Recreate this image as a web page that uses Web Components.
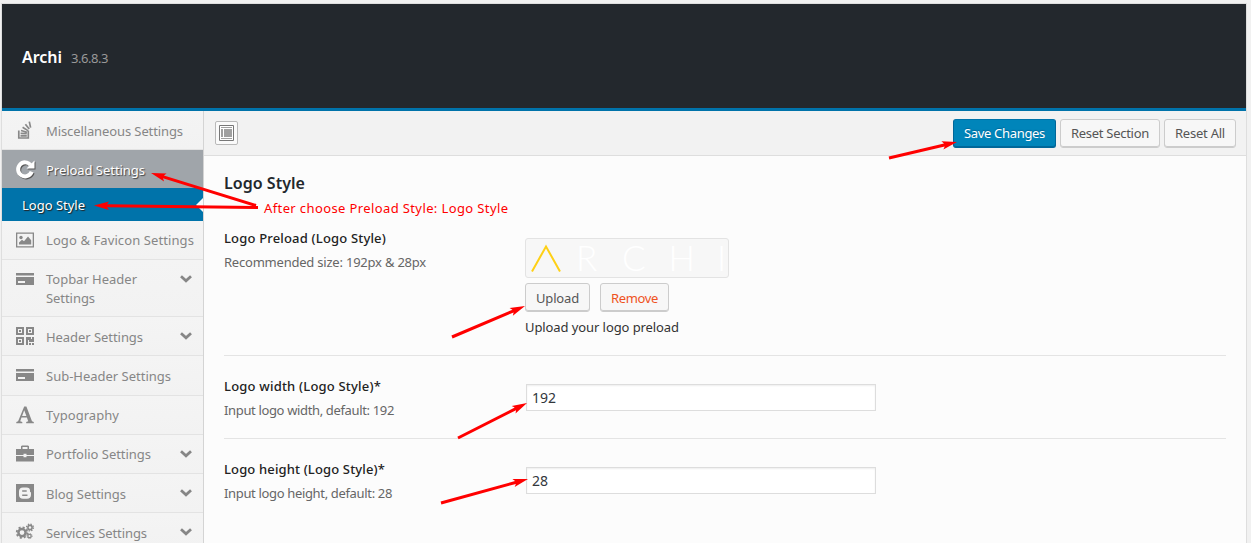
<!DOCTYPE html>
<html lang="en">
<head>
<meta charset="utf-8">
<title>Archi Settings</title>
<style>
html,body{margin:0;height:100%;overflow:hidden;background:#f1f1f1}
body{font:13px/19px "Noto Sans","Open Sans",sans-serif;color:#333}
</style>
</head>
<body>
<options-panel></options-panel>
<script>
const define=(name,html,setup)=>customElements.define(name,class extends HTMLElement{
  connectedCallback(){
    if(this.shadowRoot)return;
    const t=document.createElement('template');
    t.innerHTML=html;
    this.attachShadow({mode:'open'}).append(t.content.cloneNode(true));
    if(setup)setup(this,this.shadowRoot);
  }
});

/* A line of text tracked so that it fills the width given in its w attribute. */
define('tracked-text',`<style>:host{display:inline-block;white-space:nowrap}span{display:inline-block}</style><span><slot></slot></span>`,(el,root)=>{
  const s=root.querySelector('span'),w=+el.getAttribute('w'),n=el.textContent.length;
  s.style.letterSpacing=((w-s.getBoundingClientRect().width)/n)+'px';
});

const ICONS={
 stack:'<g fill="none" stroke="#888" stroke-width="1.7"><path d="M2.8 9.500v7.500h9.500v-7.500M4.500 14.800h6.300M4.600 12.400l6.200.3M5 9.500l6 1.700M6.600 6.300l5.300 3.300M9.400 3.200l3.800 4.900M13.300.6l1.300 6"/></g>',
 repeat:'<path d="M15.700 11.800A7 7 0 1 1 14.600 5" fill="none" stroke="#fff" stroke-width="4"/><path d="M18.500 .5v8h-8z" fill="#fff"/>',
 image:'<path fill="#888" fill-rule="evenodd" d="M0 1.500h18v15H0zM1.300 2.800v12.400h15.400V2.800z"/><circle cx="5" cy="6.500" r="1.700" fill="#888"/><path fill="#888" d="M3 13.500v-2l3-2.700 2 1.500 4-4.800 3.200 3.700v4.300z"/>',
 card:'<path fill="#888" fill-rule="evenodd" d="M0 3h18v2.500H0zM0 7h18v8H0zM2 11v2h7v-2z"/>',
 qr:'<path fill="#888" fill-rule="evenodd" d="M0 0h8v8H0zM2 2v4h4V2zM3 3h2v2H3zM10 0h8v8h-8zM12 2v4h4V2zM13 3h2v2h-2zM0 10h8v8H0zM2 12v4h4v-4zM3 13h2v2H3zM10 10h5v2h1v-2h2v5h-5v-2h-1v5h-2zM13 16h2v2h-2zM16 16h2v2h-2z"/>',
 font:'<path fill="#888" fill-rule="evenodd" d="M8.200.5h2.200l5.600 14.700 1.800.7v1.400h-7.600v-1.400l2-.7-1.300-3.700H5.500l-1.300 3.700 2.100.7v1.400H.3v-1.400l1.800-.7zM8.200 4.300l-2.100 5.600h4.300z"/>',
 briefcase:'<path fill="#888" fill-rule="evenodd" d="M5 4V1.300L6 .5h6l1 .8V4h5v6h-7.500V8.800h-3V10H0V4zM6.500 2v2h5V2zM0 11h7.500v1.300h3V11H18v5.500H0z"/>',
 blog:'<path fill="#888" d="M0 0h18v18H0z"/><path fill="#f2f2f2" fill-rule="evenodd" d="M7 3.500h3.500c2.300 0 3.500 1.200 3.500 3v1.200l1 .8v2.500c0 2.300-1.500 3.700-4 3.700H7c-2.500 0-4-1.500-4-3.700V7.200c0-2.200 1.500-3.700 4-3.700zM6.200 6.200v1.500h4.500V6.200zM6.200 10.500v1.600h5.300v-1.600z"/>',
 cogs:'<g fill="none" stroke="#888"><circle cx="6" cy="9.600" r="3.600" stroke-width="2.500"/><circle cx="6" cy="9.600" r="5.300" stroke-width="1.800" stroke-dasharray="2.080 2.080"/><circle cx="14" cy="4.500" r="2.100" stroke-width="1.600"/><circle cx="14" cy="4.500" r="3.400" stroke-width="1.400" stroke-dasharray="1.340 1.340"/><circle cx="13.500" cy="13" r="1.700" stroke-width="1.300"/><circle cx="13.500" cy="13" r="2.600" stroke-width="1" stroke-dasharray="1.020 1.020"/></g>'
};

define('nav-item',`<style>
:host{display:flex;box-sizing:border-box;height:39px;padding:10px 0 0 14px;border-bottom:1px solid #e3e3e3;color:#868686;align-items:flex-start;background:linear-gradient(#f4f4f4,#f2f2f2)}
:host([tall]){height:57px}
:host([on]){background:#a0a5aa;color:#fff;border:0;height:38px;text-shadow:1px 1px 1px #444}
:host([on]) .i{filter:drop-shadow(1px 1px 0 #555)}
.i{flex:none;width:18px;height:18px;overflow:visible}
.t{flex:1;margin-left:12px}
:host([low]) .t{margin-top:1px}
.c{flex:none;width:12px;height:8px;margin:5px 11px 0 0}
</style><svg class="i" viewBox="0 0 18 18"></svg><div class="t"><slot></slot></div>`,(el,r)=>{
  r.querySelector('.i').innerHTML=ICONS[el.getAttribute('icon')];
  if(el.hasAttribute('more'))r.querySelector('.t').insertAdjacentHTML('afterend','<svg class="c" viewBox="0 0 12 8"><path d="M1 1.300l5 4.500 5-4.500" fill="none" stroke="#868686" stroke-width="2.800"/></svg>');
});

define('sub-item',`<style>:host{display:flex;justify-content:space-between;align-items:center;height:33px;padding-left:20px;background:#0073aa;color:#fff;text-shadow:1px 1px 1px #222}i{border:7px solid transparent;border-left:0;border-right-color:#fcfcfc}::slotted(*){margin-top:2px}</style><slot></slot><i></i>`);

define('side-nav',`<style>:host{display:block;width:201px;flex:none;background:#f2f2f2;border-right:1px solid #d4d4d4;overflow:hidden}</style>
<nav-item low icon="stack"><tracked-text w="137">Miscellaneous Settings</tracked-text></nav-item>
<nav-item low icon="repeat" on><tracked-text w="99">Preload Settings</tracked-text></nav-item>
<sub-item><tracked-text w="63">Logo Style</tracked-text></sub-item>
<nav-item icon="image"><tracked-text w="148">Logo &amp; Favicon Settings</tracked-text></nav-item>
<nav-item icon="card" tall more><tracked-text w="91">Topbar Header</tracked-text><br><tracked-text w="49">Settings</tracked-text></nav-item>
<nav-item low icon="qr" more><tracked-text w="97">Header Settings</tracked-text></nav-item>
<nav-item low icon="card" style="height:40px"><tracked-text w="125">Sub-Header Settings</tracked-text></nav-item>
<nav-item icon="font"><tracked-text w="73">Typography</tracked-text></nav-item>
<nav-item icon="briefcase" more><tracked-text w="105">Portfolio Settings</tracked-text></nav-item>
<nav-item low icon="blog" more><tracked-text w="80">Blog Settings</tracked-text></nav-item>
<nav-item low icon="cogs" more><tracked-text w="101">Services Settings</tracked-text></nav-item>`);

define('wp-button',`<style>:host{display:inline-block}
button{display:block;box-sizing:border-box;width:100%;height:29px;padding:0;margin:0;border:1px solid #ccc;border-radius:3px;background:#f7f7f7;box-shadow:inset 0 -1px 0 #ccc;color:#555;font:inherit;line-height:26px;text-align:center}
:host([up]) button{padding-bottom:2px}
:host([primary]) button{background:#0085ba;border-color:#0073aa #006799 #006799;box-shadow:inset 0 -1px 0 #006799;color:#fff;text-shadow:0 -1px 1px #006799}
:host([danger]) button{color:#ef521d}</style><button><slot></slot></button>`);

define('panel-toolbar',`<style>:host{display:flex;box-sizing:border-box;height:45px;padding:8px 10px 0 11px;background:#f2f2f2;border-bottom:1px solid #dedede;gap:4px}
.e{box-sizing:border-box;width:23px;height:24px;margin:2px auto 0 0;border:1px solid #b9b9b9;border-radius:2px;background:#fafafa;display:grid;place-items:center}</style>
<div class="e"><svg width="15" height="16"><path d="M.5.500h14v15H.5z" fill="#fff" stroke="#777"/><path d="M2 2h11v1H2zM2 4h2v8H2zM5 4h8v8H5zM2 13h11v1H2z" fill="#a0a0a0"/></svg></div>
<wp-button up primary style="width:103px"><tracked-text w="81">Save Changes</tracked-text></wp-button>
<wp-button up style="width:100px"><tracked-text w="78">Reset Section</tracked-text></wp-button>
<wp-button up style="width:72px"><tracked-text w="50">Reset All</tracked-text></wp-button>`);

define('field-row',`<style>:host{display:grid;grid-template-columns:301px 1fr;box-sizing:border-box;height:83px;border-bottom:1px solid #e4e4e4;margin:0 20px}
:host([last]){border:0}
.l{padding-top:21px;color:#222;font-weight:500}.d{margin-top:5px;color:#666;font-weight:400}</style>
<div class="l"><slot name="label"></slot><div class="d"><slot name="hint"></slot></div></div><div><slot></slot></div>`);

define('text-field',`<style>:host{display:block;padding:28px 0 0 1px}input{display:block;box-sizing:border-box;width:350px;height:27px;margin:0;padding:0 5px 1px;border:1px solid #ddd;background:#fff;box-shadow:inset 0 1px 2px rgba(0,0,0,.07);color:#32373c;font:14px "Noto Sans","Open Sans",sans-serif;letter-spacing:-.05px;outline:0}</style><input>`,(el,r)=>{r.querySelector('input').value=el.getAttribute('value')});

define('logo-preview',`<style>:host{display:block;box-sizing:border-box;width:204px;height:40px;border:1px solid #e3e3e3;border-radius:3px;background:#f7f7f7}svg{display:block;overflow:visible}text{font:300 35px Lato,sans-serif;fill:#fff}</style>
<svg width="202" height="38"><path d="M6 32.500L20 7.500l14 25" fill="none" stroke="#fed016" stroke-width="2"/><text x="50" y="32">R</text><text x="96" y="32">C</text><text x="142.500" y="32">H</text><text x="191" y="32">I</text></svg>`);

define('settings-form',`<style>:host{display:block}h2{margin:0;padding:16px 20px 0;height:39px;box-sizing:border-box;font-size:16px;line-height:22px;font-weight:600;color:#23282d}
field-row:first-of-type{height:161px}.u{padding-top:43px}.b{display:flex;gap:10px;margin-top:5px}.n{margin-top:6px;color:#333}</style>
<h2><tracked-text w="81">Logo Style</tracked-text></h2>
<field-row><tracked-text slot="label" w="162" style="margin-top:12px;padding-top:1px">Logo Preload (Logo Style)</tracked-text><tracked-text slot="hint" w="202">Recommended size: 192px &amp; 28px</tracked-text>
<div class="u"><logo-preview></logo-preview><div class="b"><wp-button style="width:65px"><tracked-text w="43">Upload</tracked-text></wp-button><wp-button danger style="width:69px"><tracked-text w="47">Remove</tracked-text></wp-button></div><div class="n"><tracked-text w="154">Upload your logo preload</tracked-text></div></div></field-row>
<field-row><tracked-text slot="label" w="157">Logo width (Logo Style)*</tracked-text><tracked-text slot="hint" w="170">Input logo width, default: 192</tracked-text><text-field value="192"></text-field></field-row>
<field-row last><tracked-text slot="label" w="161">Logo height (Logo Style)*</tracked-text><tracked-text slot="hint" w="168">Input logo height, default: 28</tracked-text><text-field value="28"></text-field></field-row>`);

/* Red callouts on top of the panel: each arrow runs from its tail to its tip. */
define('callout-layer',`<style>:host{position:absolute;inset:0;pointer-events:none}svg{display:block}text{font:13px "Noto Sans","Open Sans",sans-serif;fill:#f00}</style>
<svg width="1251" height="543"><text x="264" y="213" textLength="244">After choose Preload Style: Logo Style</text></svg>`,(el,r)=>{
  const svg=r.querySelector('svg');
  for(const [x,y,tx,ty] of [[256,205.500,151,173],[258,207.500,94,205.500],[889,158,957,142],[452,337,525,306],[458,438,527,403],[441,503,528,479]]){
    const L=Math.hypot(tx-x,ty-y),a=Math.atan2(ty-y,tx-x)*180/Math.PI;
    const p=document.createElementNS('http://www.w3.org/2000/svg','path');
    p.setAttribute('d',`M0-1.500H${L-13}L${L-15}-4.200L${L} 0L${L-15} 4.200L${L-13} 1.500H0z`);
    p.setAttribute('fill','#f00');
    p.setAttribute('transform',`translate(${x} ${y}) rotate(${a})`);
    svg.append(p);
  }
});

define('panel-header',`<style>:host{display:flex;align-items:baseline;box-sizing:border-box;height:107px;padding:42px 20px 0;background:#23282d;border-bottom:3px solid #0073aa;color:#999}b{font-size:16px;line-height:22px;font-weight:600;color:#fff;margin-right:9px}</style><b><tracked-text w="40">Archi</tracked-text></b><tracked-text w="37">3.6.8.3</tracked-text>`);

define('options-panel',`<style>:host{display:block;height:543px;position:relative;overflow:hidden}
.p{box-sizing:border-box;height:543px;margin:3px 4px 0 1px;border:1px solid #dedede;border-bottom:0}
.w{display:flex;height:440px}main{flex:1;background:#fcfcfc}</style>
<div class="p"><panel-header></panel-header><div class="w"><side-nav></side-nav><main><panel-toolbar></panel-toolbar><settings-form></settings-form></main></div></div><callout-layer></callout-layer>`);
</script>
</body>
</html>
